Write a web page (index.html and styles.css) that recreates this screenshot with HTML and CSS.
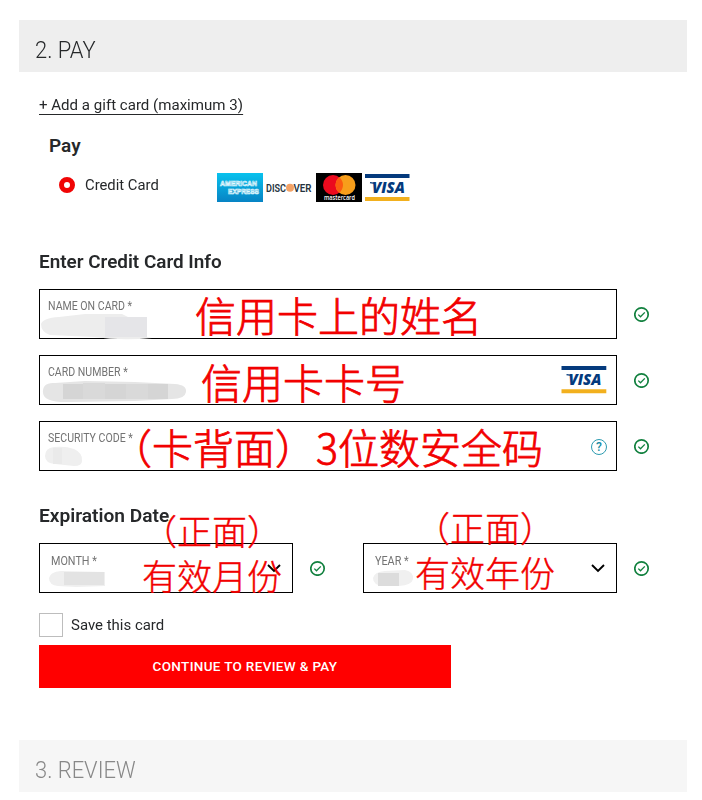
FILE: index.html
```html
<!DOCTYPE html>
<html lang="en">
<head>
<meta charset="utf-8">
<title>Checkout</title>
<link rel="stylesheet" href="styles.css">
</head>
<body>
<svg class="defs" width="0" height="0" aria-hidden="true">
  <symbol id="check" viewBox="0 0 16 16"><circle cx="7.500" cy="8.500" r="6.700" fill="none" stroke="#12813f" stroke-width="1.700"/><path d="M4.300 8.600l2.200 2.200 4.300-4.400" fill="none" stroke="#12813f" stroke-width="1.300"/></symbol>
  <symbol id="chevron" viewBox="0 0 14 9"><path d="M1 1l6 6 6-6" fill="none" stroke="#000" stroke-width="1.900"/></symbol>
</svg>
<main class="page">
  <h1 class="bar"><span class="t-step2">2. PAY</span></h1>
  <section class="pay">
    <a class="gift"><span class="t-gift">+ Add a gift card (maximum 3)</span></a>
    <h2 class="pay-title"><span class="t-pay">Pay</span></h2>
    <div class="method">
      <span class="radio"></span>
      <span class="method-name"><span class="t-cc">Credit Card</span></span>
      <div class="brands">
        <svg width="46" height="29" viewBox="0 0 46 29"><defs><linearGradient id="amex" x2="0" y2="1"><stop stop-color="#08c2ee"/><stop offset="1" stop-color="#0783c4"/></linearGradient></defs><path fill="url(#amex)" d="M0 0h46v29H0z"/><text class="amex-word" x="3" y="13" textLength="37" lengthAdjust="spacingAndGlyphs">AMERICAN</text><text class="amex-word" x="11" y="21" textLength="31" lengthAdjust="spacingAndGlyphs">EXPRESS</text></svg>
        <svg width="47" height="29" viewBox="0 0 47 29"><circle cx="24" cy="14.700" r="4" fill="#f3a266"/><text class="disc-word" x="0" y="18.600" textLength="20" lengthAdjust="spacingAndGlyphs">DISC</text><text class="disc-word" x="27.500" y="18.600" textLength="18" lengthAdjust="spacingAndGlyphs">VER</text></svg>
        <svg width="46" height="29" viewBox="0 0 46 29"><path d="M0 0h46v29H0z"/><circle cx="17" cy="12" r="10" fill="#eb0a1e"/><circle cx="29.500" cy="12" r="10" fill="#f79e1b"/><path d="M23.250 4.200a10 10 0 0 1 0 15.600 10 10 0 0 1 0-15.600z" fill="#fb5b10"/><text class="mc-word" x="8" y="27" textLength="31" lengthAdjust="spacingAndGlyphs">mastercard</text></svg>
        <svg width="46" height="29" viewBox="0 0 46 29"><path fill="#043a7d" d="M0 1h44.500v4H0z"/><path fill="#f2b01e" d="M0 24h44.500v4H0z"/><path d="M5 9.600l5 .8" stroke="#043a7d" stroke-width="1.300"/><text x="7" y="20" textLength="33" lengthAdjust="spacingAndGlyphs" class="visa-word">VISA</text></svg>
      </div>
    </div>

    <h2 class="title"><span class="t-info">Enter Credit Card Info</span></h2>
    <div class="row">
      <div class="field"><span class="label t-name">NAME ON CARD *</span>
        <svg class="smudge" width="108" height="25"><path d="M1 10q2-6 18-7l26-3 37 0 6 3h19v20l5 1q-30 3-58-1L10 21Q1 18 1 10z" fill="#ededed"/><path d="M65 3h42v20H65z" fill="#e5e5e8"/></svg>
        <span class="note note-name" lang="zh">信用卡上的姓名</span></div>
      <svg class="ok"><use href="#check"/></svg>
    </div>
    <div class="row">
      <div class="field"><span class="label t-number">CARD NUMBER *</span>
        <svg class="smudge" width="148" height="25"><path d="M3 13Q2 2 15 3l30-2 50 1 40 2q12 1 11 8-1 7-14 7l-37 2-65 1Q4 23 3 13z" fill="#e5e5e5"/><path d="M23 4h105v15H23z" fill="#d5d5d5"/><path d="M43 3h22v16H43zM86 4h22v15H86z" fill="#d9d9d9"/></svg>
        <svg class="field-visa" width="46" height="29" viewBox="0 0 46 29"><path fill="#043a7d" d="M.5 1H45.300v4H.5z"/><path fill="#f2b01e" d="M.5 24.300h44.800v4H.5z"/><path d="M5.500 9.600l5 .8" stroke="#043a7d" stroke-width="1.300"/><text x="7.500" y="20" textLength="33" lengthAdjust="spacingAndGlyphs" class="visa-word">VISA</text></svg>
        <span class="note note-number" lang="zh">信用卡卡号</span></div>
      <svg class="ok"><use href="#check"/></svg>
    </div>
    <div class="row">
      <div class="field"><span class="label t-code">SECURITY CODE *</span>
        <svg class="smudge" width="48" height="25"><path d="M5 10Q5 2 14 1q12-1 20 2 9 4 8 12 0 5-8 5l-19-2Q5 17 5 10z" fill="#efefef"/><path d="M13 2h9v16h-9z" fill="#eaeaea"/></svg>
        <span class="help">?</span>
        <span class="note note-code" lang="zh">（卡背面）3位数安全码</span></div>
      <svg class="ok"><use href="#check"/></svg>
    </div>

    <h2 class="title title-date"><span class="t-date">Expiration Date</span></h2>
    <div class="dates">
      <div class="row">
        <div class="field select"><span class="label t-month">MONTH *</span>
          <svg class="smudge" width="68" height="22"><path d="M9 10q1-6 12-7l44 1v14l-29 1-18-1Q9 17 9 10z" fill="#efefef"/><path d="M24 4h40v13H24z" fill="#e3e3e3"/></svg>
          <svg class="chevron"><use href="#chevron"/></svg>
          <span class="note small note-front1" lang="zh">（正面）</span><span class="note small note-month" lang="zh">有效月份</span></div>
        <svg class="ok"><use href="#check"/></svg>
      </div>
      <div class="row">
        <div class="field select"><span class="label t-year">YEAR *</span>
          <svg class="smudge" width="52" height="22"><path d="M9 10q1-6 12-7l20-1q9 2 8 9-1 6-14 7l-16 0Q9 17 9 10z" fill="#f0f0f0"/><path d="M14 5h21v13H14z" fill="#dcdcdc"/></svg>
          <svg class="chevron"><use href="#chevron"/></svg>
          <span class="note small note-front2" lang="zh">（正面）</span><span class="note small note-year" lang="zh">有效年份</span></div>
        <svg class="ok"><use href="#check"/></svg>
      </div>
    </div>
    <label class="save"><span class="box"></span><span class="t-save">Save this card</span></label>
    <button class="continue"><span class="t-btn">CONTINUE TO REVIEW &amp; PAY</span></button>
  </section>
  <h1 class="bar next"><span class="t-step3">3. REVIEW</span></h1>
</main>
</body>
</html>
```
FILE: styles.css
```css
* { box-sizing: border-box; }
body { margin: 0; background: #fff; color: #26282a; font-family: Roboto, "Noto Sans CJK SC", sans-serif; }
.defs { position: absolute; }
.page { width: 668px; margin: 20px 0 0 19px; }
.bar { margin: 0; height: 52px; padding: 4px 0 0 16px; background: #eee; font-size: 24px; font-weight: 300; line-height: 52px; white-space: nowrap; }
.bar.next { background: #f6f6f6; color: #888; }
[class^="t-"] { display: inline-block; transform-origin: 0 50%; white-space: nowrap; }
.t-step2, .t-step3 { transform: scaleX(.913); }
.t-gift { transform: scaleX(.972); }
.t-cc { transform: scaleX(.955); }
.t-save { transform: scaleX(.965); }
.t-info { transform: scaleX(.994); }
.t-date { transform: scaleX(1.008); }

.pay { height: 668px; padding: 22px 20px 0; }
.gift { display: block; height: 22px; font-size: 15.5px; line-height: 22px; }
.gift span { border-bottom: 1px solid #26282a; line-height: 17px; }
.pay-title { margin: 18px 0 0 10px; height: 24px; font-size: 19px; line-height: 24px; font-weight: 600; }
.method { display: flex; align-items: center; height: 29px; margin: 15px 0 0 20px; }
.radio { width: 16px; height: 16px; border: 5px solid #f00505; border-radius: 50%; margin-top: -5px; }
.method-name { width: 132px; margin: -5px 0 0 10px; font-size: 15.5px; }
.brands { display: flex; gap: 3px; }
.brands svg { display: block; }
.title { margin: 48px 0 15px; height: 24px; font-size: 19px; line-height: 24px; font-weight: 600; }
.title-date { margin: 33px 0 15px; }

.row { display: flex; align-items: center; gap: 17px; }
.row + .row { margin-top: 16px; }
.field { position: relative; width: 578px; height: 50px; padding: 9px 8px 0; border: 1px solid #000; }
.label { display: block; width: max-content; color: #737373; font-size: 12px; line-height: 15px; transform: scaleX(.88); transform-origin: 0 50%; white-space: nowrap; }
.t-month, .t-year { transform: scaleX(.9); }
.smudge { display: block; margin: 0 0 0 -8px; overflow: visible; filter: blur(.6px); }
.ok { width: 16px; height: 16px; flex: none; }
.field-visa { position: absolute; right: 9px; top: 9px; }
.help { position: absolute; right: 9px; top: 17px; width: 16px; height: 16px; border: 1px solid #2c9bb0; border-radius: 50%; color: #168ca4; font-size: 12px; font-weight: 500; line-height: 14px; text-align: center; }
.dates { display: grid; grid-template-columns: 287px 287px; gap: 37px; }
.dates .row { margin: 0; }
.select { width: 254px; padding: 10px 11px 0; }
.select .smudge { margin: -1px 0 0 -11px; }
.chevron { position: absolute; right: 11px; top: 20px; width: 14px; height: 9px; }

.note { position: absolute; z-index: 1; color: #f20000; font-family: "Noto Sans CJK SC", sans-serif; font-size: 41px; font-weight: 300; line-height: 1; white-space: nowrap; -webkit-text-stroke: .8px #f20000; }
.small { font-size: 35px; -webkit-text-stroke-width: .4px; }
.note-name { left: 155px; top: 4px; }
.note-number { left: 161px; top: 5px; }
.note-code { left: 71px; top: 4px; }
.note-front1 { left: 102px; top: -32px; }
.note-month { left: 102px; top: 13px; }
.note-front2 { left: 51px; top: -35px; }
.note-year { left: 51px; top: 10px; }

.save { display: flex; align-items: center; gap: 8px; height: 24px; margin-top: 20px; font-size: 15.5px; }
.box { width: 24px; height: 24px; border: 1px solid #bdbdbd; }
.continue { display: block; width: 412px; height: 43px; margin-top: 8px; padding: 0; border: 0; background: #f00; color: #fff; font: 500 13.5px/43px Roboto, sans-serif; letter-spacing: .33px; }

.visa-word { font: italic 800 15px "Open Sans", sans-serif; fill: #043a7d; }
.amex-word { font: 700 8px "Liberation Sans", sans-serif; fill: #1597cf; stroke: #e7faff; stroke-width: .7px; }
.disc-word { font: 600 11.5px Roboto, sans-serif; fill: #25333e; }
.mc-word { font: 600 6.5px "Open Sans", sans-serif; fill: #fff; }
```
